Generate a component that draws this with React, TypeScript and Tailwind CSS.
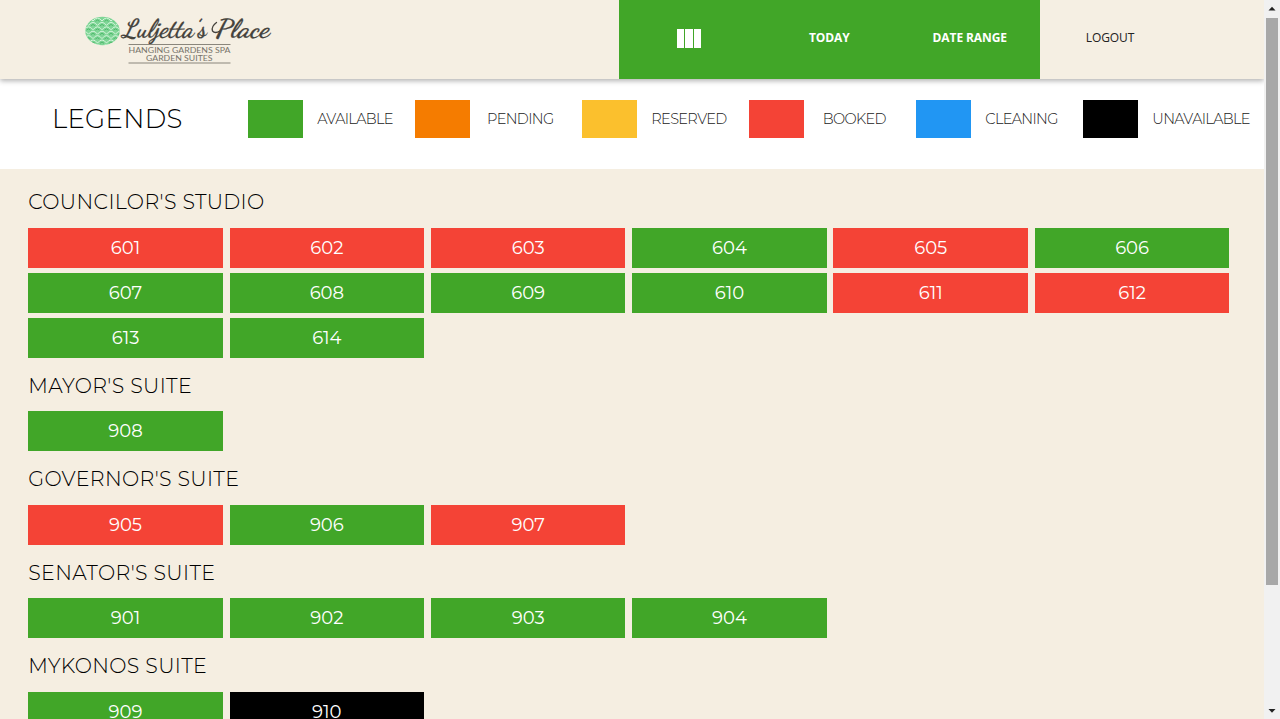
type Status = 'available' | 'pending' | 'reserved' | 'booked' | 'cleaning' | 'unavailable';

const statusColor: Record<Status, string> = {
  available: 'bg-[#41a628]',
  pending: 'bg-[#f57c00]',
  reserved: 'bg-[#fbc02d]',
  booked: 'bg-[#f44336]',
  cleaning: 'bg-[#2196f3]',
  unavailable: 'bg-black',
};

const legends: { status: Status; label: string }[] = [
  { status: 'available', label: 'AVAILABLE' },
  { status: 'pending', label: 'PENDING' },
  { status: 'reserved', label: 'RESERVED' },
  { status: 'booked', label: 'BOOKED' },
  { status: 'cleaning', label: 'CLEANING' },
  { status: 'unavailable', label: 'UNAVAILABLE' },
];

const a: Status = 'available';
const b: Status = 'booked';

const sections: { name: string; rooms: [number, Status][] }[] = [
  {
    name: "COUNCILOR'S STUDIO",
    rooms: [
      [601, b], [602, b], [603, b], [604, a], [605, b], [606, a], [607, a],
      [608, a], [609, a], [610, a], [611, b], [612, b], [613, a], [614, a],
    ],
  },
  { name: "MAYOR'S SUITE", rooms: [[908, a]] },
  { name: "GOVERNOR'S SUITE", rooms: [[905, b], [906, a], [907, b]] },
  { name: "SENATOR'S SUITE", rooms: [[901, a], [902, a], [903, a], [904, a]] },
  { name: 'MYKONOS SUITE', rooms: [[909, a], [910, 'unavailable']] },
];

function Logo() {
  const rows = [0, 1, 2, 3, 4, 5, 6];
  const cols = [0, 1, 2, 3, 4];
  return (
    <svg width="190" height="54" viewBox="84 13 190 54" className="ml-[84px] mt-[13px] shrink-0">
      <defs>
        <clipPath id="emblem">
          <ellipse cx="102.5" cy="31" rx="17" ry="14" />
        </clipPath>
      </defs>
      <ellipse cx="102.500" cy="31" rx="17.200" ry="14.200" fill="#7fd596" />
      <g clipPath="url(#emblem)" fill="none">
        {rows.map((r) =>
          cols.map((c) => {
            const x = 84 + c * 9 - (r % 2) * 4.5;
            const y = 21 + r * 4.4;
            return (
              <g key={`${r}-${c}`}>
                <path d={`M${x} ${y}q4.500 -6 9 0`} stroke="#d3f3da" strokeWidth="1" />
                <path d={`M${x + 2.5} ${y + 0.3}q2 -2.500 4 0`} stroke="#4fb86c" strokeWidth="1" />
              </g>
            );
          }),
        )}
      </g>
      <g fill="#45433d" stroke="#45433d" strokeWidth="0.2" className="font-['Dancing_Script','Liberation_Serif',serif] text-[26px] font-bold">
        <text x="122" y="37" textLength="84" lengthAdjust="spacingAndGlyphs" transform="translate(4.8 0) skewX(-7)">
          Luljetta’s
        </text>
        <text x="215" y="37" textLength="54" lengthAdjust="spacingAndGlyphs" transform="translate(4.8 0) skewX(-7)">
          Place
        </text>
      </g>
      <path
        d="M220 31q-5 3 -7.500 0q-1.500 -4.500 4 -8.500"
        fill="none"
        stroke="#45433d"
        strokeWidth="1.300"
        strokeLinecap="round"
      />
      <path d="M128.500 44.500h102M128.500 63h102" stroke="#8a867c" strokeWidth="1.100" />
      <text x="128.500" y="52.500" textLength="102" lengthAdjust="spacingAndGlyphs" fill="#77736a" className="font-[Lato,sans-serif] text-[8px]">
        HANGING GARDENS SPA
      </text>
      <text x="146" y="61" textLength="66.500" lengthAdjust="spacingAndGlyphs" fill="#77736a" className="font-[Lato,sans-serif] text-[8px]">
        GARDEN SUITES
      </text>
    </svg>
  );
}

function Header() {
  return (
    <header className="relative z-10 flex h-[78.500px] shrink-0 bg-[#f5efe3] font-['Open_Sans',sans-serif] text-[12px] shadow-[0_2px_5px_rgba(0,0,0,0.3)]">
      <div className="w-[618.500px] shrink-0">
        <Logo />
      </div>
      <nav className="flex">
        <div className="flex w-[421.500px] bg-[#41a628] pb-[2px] font-bold tracking-[-0.1px] text-white">
          <button className="flex flex-1 items-center justify-center gap-[1px] pt-px" aria-label="Columns">
            <i className="h-[19px] w-[7.500px] bg-white" />
            <i className="h-[19px] w-[7.500px] bg-white" />
            <i className="h-[19px] w-[7.500px] bg-white" />
          </button>
          <button className="flex-1">TODAY</button>
          <button className="flex-1">DATE RANGE</button>
        </div>
        <button className="w-[140px] pb-[2px] font-medium tracking-[-0.1px] text-[#222]">LOGOUT</button>
      </nav>
    </header>
  );
}

function Legends() {
  return (
    <div className="flex h-[90.500px] shrink-0 bg-white pt-[21.500px]">
      <h1 className="w-[248.300px] shrink-0 pl-[52px] text-[26px] leading-[38px] font-light tracking-[0.300px] text-black">
        LEGENDS
      </h1>
      {legends.map((l) => (
        <div key={l.status} className="flex w-[167px] shrink-0">
          <div className={`h-[37.500px] w-[55px] shrink-0 ${statusColor[l.status]}`} />
          <div className="ml-[14px] h-[37px] min-w-[72px] text-center text-[14.500px] leading-[39px] font-light tracking-[-0.650px] whitespace-nowrap text-[#222]">
            {l.label}
          </div>
        </div>
      ))}
    </div>
  );
}

function Scrollbar() {
  return (
    <div className="flex w-4 shrink-0 flex-col items-center bg-[#f1f1f1]">
      <svg width="16" height="18" viewBox="0 0 16 18">
        <path d="M4.500 10.500L8 6.800L11.500 10.500Z" fill="#222" />
      </svg>
      <div className="h-[567px] w-[12px] bg-[#a8a8a8]" />
      <svg width="16" height="17" viewBox="0 0 16 17" className="mt-auto">
        <path d="M4.500 7L8 10.700L11.500 7Z" fill="#222" />
      </svg>
    </div>
  );
}

export default function App() {
  return (
    <div className="flex h-[719px] w-[1280px] overflow-hidden font-[Montserrat,Inter,sans-serif]">
      <div className="flex w-[1264px] shrink-0 flex-col overflow-hidden bg-[#f5eee1]">
        <Header />
        <Legends />
        <main className="shrink-0 pt-[5.100px] pl-[28.200px]">
          {sections.map((s) => (
            <section key={s.name}>
              <h2 className="h-[53.600px] text-[20.500px] leading-[56.400px] font-light tracking-[0.370px] text-black">{s.name}</h2>
              <div className="grid w-[1201.200px] grid-cols-6 gap-x-[6.700px] gap-y-[5px]">
                {s.rooms.map(([room, status]) => (
                  <div key={room} className={`h-10 text-center text-[18px] leading-[41px] text-white ${statusColor[status]}`}>
                    {room}
                  </div>
                ))}
              </div>
            </section>
          ))}
        </main>
      </div>
      <Scrollbar />
    </div>
  );
}
